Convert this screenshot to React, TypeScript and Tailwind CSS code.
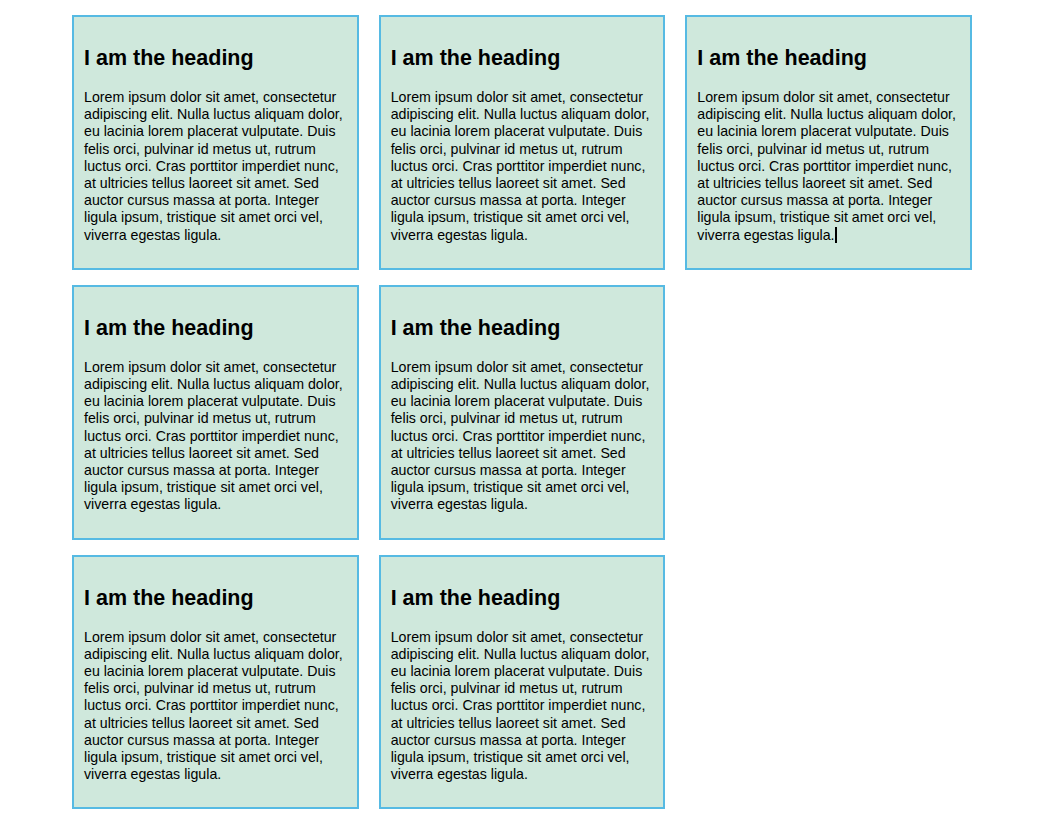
import React from 'react';

const LOREM =
  'Lorem ipsum dolor sit amet, consectetur adipiscing elit. Nulla luctus aliquam dolor, eu lacinia lorem placerat vulputate. Duis felis orci, pulvinar id metus ut, rutrum luctus orci. Cras porttitor imperdiet nunc, at ultricies tellus laoreet sit amet. Sed auctor cursus massa at porta. Integer ligula ipsum, tristique sit amet orci vel, viverra egestas ligula.';

const Card: React.FC<{ caret?: boolean }> = ({ caret }) => (
  <div className="border-2 border-[#56bae3] bg-[#cfe8dc] px-[10px] py-[10px] text-black">
    <h2 className="mt-[19px] mb-[18px] text-[21.5px] leading-[25px] font-bold">I am the heading</h2>
    <p className="mb-[14px] text-[14.2px] leading-[17.2px]">
      {LOREM}
      {caret && <span className="inline-block w-[2px] h-[16px] bg-black align-[-3px]" />}
    </p>
  </div>
);

export default function App() {
  return (
    <div className="min-h-screen bg-white pl-[72px] pt-[15px] pb-[20px] font-['Liberation_Sans',Arial,sans-serif]">
      <div className="grid grid-cols-[repeat(3,286.67px)] gap-x-[20px] gap-y-[15px] items-start">
        <Card />
        <Card />
        <Card caret />
        <Card />
        <Card />
        <div />
        <Card />
        <Card />
      </div>
    </div>
  );
}
